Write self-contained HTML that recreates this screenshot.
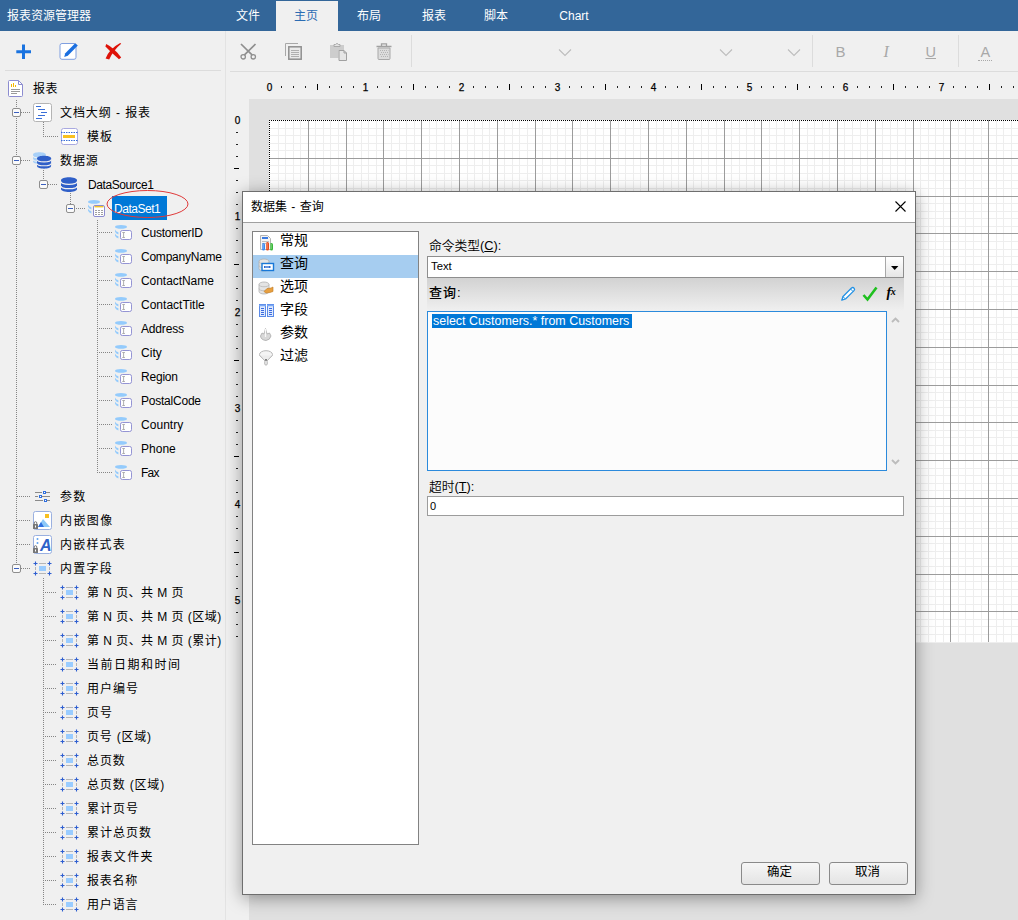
<!DOCTYPE html><html lang="zh-CN"><head><meta charset="utf-8"><title>报表设计器</title><style>
*{box-sizing:border-box;margin:0;padding:0}
html,body{width:1018px;height:920px;overflow:hidden;background:#f0f0f0}
body{position:relative;font-family:"Liberation Sans","Noto Sans CJK SC",sans-serif;font-size:12px;color:#000}
.abs{position:absolute}
#topbar{position:absolute;left:0;top:0;width:1018px;height:31px;background:#336699}
.tab{position:absolute;top:0;height:31px;line-height:33px;color:#fff;font-size:12px;text-align:center;white-space:nowrap}
.tab.act{padding-right:2px;top:1px;height:30px;background:#f0f0f0;color:#2b6cb3;line-height:31px}
#lefthead{position:absolute;left:7px;top:1px;line-height:31px;color:#fff;font-size:12px;white-space:nowrap}
#left{position:absolute;left:0;top:31px;width:226px;height:889px;background:#f0f0f0;border-right:1px solid #e3e3e3}
.trow{position:absolute;height:22px;line-height:22px;font-size:12px;white-space:nowrap;font-weight:400}
.tx{position:absolute;white-space:nowrap}
svg{position:absolute;overflow:visible}
</style></head><body>
<div id="topbar"><div id="lefthead">报表资源管理器</div>
<div class="tab" style="left:223px;width:50px">文件</div>
<div class="tab act" style="left:276px;width:62px">主页</div>
<div class="tab" style="left:338px;width:62px">布局</div>
<div class="tab" style="left:403px;width:62px">报表</div>
<div class="tab" style="left:465px;width:62px">脚本</div>
<div class="tab" style="left:543px;width:62px">Chart</div>
</div>
<div id="left"></div>
<div class="abs" style="left:5px;top:70px;width:216px;height:1px;background:#dcdcdc"></div>
<svg style="left:16px;top:43.5px" width="16" height="16" viewBox="0 0 16 16"><path d="M7.5 0.5V15M0.3 7.8H15" stroke="#1a73e0" stroke-width="3" fill="none"/></svg>
<svg style="left:59px;top:42px" width="20" height="20" viewBox="0 0 20 20"><rect x="1" y="1.5" width="16" height="15.8" rx="2" fill="#fff" stroke="#7f9fe0" stroke-width="1"/><path d="M5.2 15L6.3 11.3L16.2 1.2L18.8 3.6L8.8 13.8Z" fill="#1a6fe0"/></svg>
<svg style="left:105px;top:43px" width="17" height="17" viewBox="0 0 17 17"><path d="M1.2 1Q9.5 5 16.2 14.6L14 16.2Q7 10.2 0.4 3.4Z" fill="#de1208"/><path d="M16.2 0.8Q8.6 7 4.2 16.4L0.6 15.4Q4.6 5.6 15.2 0Z" fill="#de1208"/></svg>
<svg style="left:0;top:0" width="226" height="920" viewBox="0 0 226 920" shape-rendering="crispEdges"><path d="M16.5 100V568" stroke="#858585" stroke-width="1" stroke-dasharray="1 1" fill="none"/><path d="M21 112.5H31" stroke="#858585" stroke-width="1" stroke-dasharray="1 1" fill="none"/><path d="M21 160.5H31" stroke="#858585" stroke-width="1" stroke-dasharray="1 1" fill="none"/><path d="M21 568.5H31" stroke="#858585" stroke-width="1" stroke-dasharray="1 1" fill="none"/><path d="M17 496.5H31" stroke="#858585" stroke-width="1" stroke-dasharray="1 1" fill="none"/><path d="M17 520.5H31" stroke="#858585" stroke-width="1" stroke-dasharray="1 1" fill="none"/><path d="M17 544.5H31" stroke="#858585" stroke-width="1" stroke-dasharray="1 1" fill="none"/><path d="M43.5 122V136" stroke="#858585" stroke-width="1" stroke-dasharray="1 1" fill="none"/><path d="M43 136.5H58" stroke="#858585" stroke-width="1" stroke-dasharray="1 1" fill="none"/><path d="M43.5 170V180" stroke="#858585" stroke-width="1" stroke-dasharray="1 1" fill="none"/><path d="M48 184.5H58" stroke="#858585" stroke-width="1" stroke-dasharray="1 1" fill="none"/><path d="M70.5 193V204" stroke="#858585" stroke-width="1" stroke-dasharray="1 1" fill="none"/><path d="M76 208.5H86" stroke="#858585" stroke-width="1" stroke-dasharray="1 1" fill="none"/><path d="M97.5 220V472" stroke="#858585" stroke-width="1" stroke-dasharray="1 1" fill="none"/><path d="M97 232.5H112" stroke="#858585" stroke-width="1" stroke-dasharray="1 1" fill="none"/><path d="M97 256.5H112" stroke="#858585" stroke-width="1" stroke-dasharray="1 1" fill="none"/><path d="M97 280.5H112" stroke="#858585" stroke-width="1" stroke-dasharray="1 1" fill="none"/><path d="M97 304.5H112" stroke="#858585" stroke-width="1" stroke-dasharray="1 1" fill="none"/><path d="M97 328.5H112" stroke="#858585" stroke-width="1" stroke-dasharray="1 1" fill="none"/><path d="M97 352.5H112" stroke="#858585" stroke-width="1" stroke-dasharray="1 1" fill="none"/><path d="M97 376.5H112" stroke="#858585" stroke-width="1" stroke-dasharray="1 1" fill="none"/><path d="M97 400.5H112" stroke="#858585" stroke-width="1" stroke-dasharray="1 1" fill="none"/><path d="M97 424.5H112" stroke="#858585" stroke-width="1" stroke-dasharray="1 1" fill="none"/><path d="M97 448.5H112" stroke="#858585" stroke-width="1" stroke-dasharray="1 1" fill="none"/><path d="M97 472.5H112" stroke="#858585" stroke-width="1" stroke-dasharray="1 1" fill="none"/><path d="M43.5 578V904" stroke="#858585" stroke-width="1" stroke-dasharray="1 1" fill="none"/><path d="M43 592.5H57" stroke="#858585" stroke-width="1" stroke-dasharray="1 1" fill="none"/><path d="M43 616.5H57" stroke="#858585" stroke-width="1" stroke-dasharray="1 1" fill="none"/><path d="M43 640.5H57" stroke="#858585" stroke-width="1" stroke-dasharray="1 1" fill="none"/><path d="M43 664.5H57" stroke="#858585" stroke-width="1" stroke-dasharray="1 1" fill="none"/><path d="M43 688.5H57" stroke="#858585" stroke-width="1" stroke-dasharray="1 1" fill="none"/><path d="M43 712.5H57" stroke="#858585" stroke-width="1" stroke-dasharray="1 1" fill="none"/><path d="M43 736.5H57" stroke="#858585" stroke-width="1" stroke-dasharray="1 1" fill="none"/><path d="M43 760.5H57" stroke="#858585" stroke-width="1" stroke-dasharray="1 1" fill="none"/><path d="M43 784.5H57" stroke="#858585" stroke-width="1" stroke-dasharray="1 1" fill="none"/><path d="M43 808.5H57" stroke="#858585" stroke-width="1" stroke-dasharray="1 1" fill="none"/><path d="M43 832.5H57" stroke="#858585" stroke-width="1" stroke-dasharray="1 1" fill="none"/><path d="M43 856.5H57" stroke="#858585" stroke-width="1" stroke-dasharray="1 1" fill="none"/><path d="M43 880.5H57" stroke="#858585" stroke-width="1" stroke-dasharray="1 1" fill="none"/><path d="M43 904.5H57" stroke="#858585" stroke-width="1" stroke-dasharray="1 1" fill="none"/><rect x="12.5" y="108.5" width="8" height="8" rx="1.5" fill="#fafafa" stroke="#8e8e8e" shape-rendering="auto"/><path d="M14 112.5H19" stroke="#3a5fbf" stroke-width="1"/><rect x="12.5" y="156.5" width="8" height="8" rx="1.5" fill="#fafafa" stroke="#8e8e8e" shape-rendering="auto"/><path d="M14 160.5H19" stroke="#3a5fbf" stroke-width="1"/><rect x="39.5" y="180.5" width="8" height="8" rx="1.5" fill="#fafafa" stroke="#8e8e8e" shape-rendering="auto"/><path d="M41 184.5H46" stroke="#3a5fbf" stroke-width="1"/><rect x="66.5" y="204.5" width="8" height="8" rx="1.5" fill="#fafafa" stroke="#8e8e8e" shape-rendering="auto"/><path d="M68 208.5H73" stroke="#3a5fbf" stroke-width="1"/><rect x="12.5" y="564.5" width="8" height="8" rx="1.5" fill="#fafafa" stroke="#8e8e8e" shape-rendering="auto"/><path d="M14 568.5H19" stroke="#3a5fbf" stroke-width="1"/></svg>
<div class="abs" style="left:112px;top:196px;width:55px;height:24px;background:#0078d7"></div>
<svg style="left:8px;top:80px" width="20" height="20"><g><path d="M0.5 1.5Q0.5 0.5 1.5 0.5H10.5L14.5 4.5V15.5Q14.5 16.5 13.5 16.5H1.5Q0.5 16.5 0.5 15.5Z" fill="#fff" stroke="#8c8cd0"/><path d="M10.5 0.5V4.5H14.5" fill="none" stroke="#8c8cd0"/><path d="M3.5 7V4M5.5 7V3M7.5 7V5" stroke="#f5b800" stroke-width="1"/><path d="M3 9.5H12M3 11.5H12M3 13.5H9" stroke="#9a9a9a" stroke-width="1"/></g></svg>
<div class="trow" style="left:33px;top:78px;color:#000;letter-spacing:0.442px">报表</div>
<svg style="left:33px;top:103px" width="20" height="20"><g><rect x="0.5" y="0.5" width="18" height="18" rx="2" fill="#fff" stroke="#b4b4b4"/><path d="M3 3.5H8M5 6.5H12M8 9.5H14M5 12.5H12M3 15.5H9" stroke="#3a6fd8" stroke-width="1"/></g></svg>
<div class="trow" style="left:60px;top:102px;color:#000;letter-spacing:0.925px">文档大纲 - 报表</div>
<svg style="left:61px;top:128px" width="20" height="20"><g><rect x="0.5" y="0.5" width="16" height="16" rx="2" fill="#fff" stroke="#a9a9e0"/><path d="M0 4.5H17M0 12.5H17" stroke="#3a6fd8" stroke-width="1" stroke-dasharray="1.5 1"/><rect x="2" y="7" width="12" height="3" fill="#f8c020"/></g></svg>
<div class="trow" style="left:87px;top:126px;color:#000;letter-spacing:0.992px">模板</div>
<svg style="left:33px;top:152px" width="20" height="20"><g><g transform="translate(0,0) scale(0.8)" opacity="1"><g><path d="M0 3.2C0 -0.8 16 -0.8 16 3.2V12C16 16 0 16 0 12Z" fill="#a8d0f8"/><path d="M0 4.6C0 8.2 16 8.2 16 4.6M0 9C0 12.6 16 12.6 16 9" fill="none" stroke="#f0f0f0" stroke-width="1.3"/></g></g><g transform="translate(4,3.5) scale(0.88)"><g><path d="M0 3.2C0 -0.8 16 -0.8 16 3.2V12C16 16 0 16 0 12Z" fill="#2f5fc8"/><path d="M0 4.6C0 8.2 16 8.2 16 4.6M0 9C0 12.6 16 12.6 16 9" fill="none" stroke="#f0f0f0" stroke-width="1.3"/></g></g></g></svg>
<div class="trow" style="left:60px;top:150px;color:#000;letter-spacing:0.928px">数据源</div>
<svg style="left:61px;top:177px" width="20" height="20"><g><path d="M0 3.2C0 -0.8 16 -0.8 16 3.2V12C16 16 0 16 0 12Z" fill="#2f5fc8"/><path d="M0 4.6C0 8.2 16 8.2 16 4.6M0 9C0 12.6 16 12.6 16 9" fill="none" stroke="#f0f0f0" stroke-width="1.3"/></g></svg>
<div class="trow" style="left:88px;top:174px;color:#000;letter-spacing:-0.422px">DataSource1</div>
<svg style="left:88px;top:200px" width="20" height="20"><g><ellipse cx="6" cy="1.9" rx="6" ry="1.9" fill="#94cbfc"/><path d="M0 4.4Q0.6 6.4 3.4 7.2V9.4Q0.4 8.6 0 6.6Z" fill="#94cbfc"/><path d="M0 8.4Q0.6 10.4 3.4 11.2V13.4Q0.4 12.6 0 10.6Z" fill="#94cbfc"/><rect x="5.5" y="5.5" width="11" height="11" rx="1.5" fill="#fff" stroke="#8c8cd0"/><path d="M6.5 6.7H15.5" stroke="#f2c428" stroke-width="1.4"/><path d="M7 10.5H9M10 10.5H12M13 10.5H15M7 12.5H9M10 12.5H12M13 12.5H15M7 14.5H9M10 14.5H12M13 14.5H15" stroke="#a0a0a0"/></g></svg>
<div class="trow" style="left:114px;top:198px;color:#fff;letter-spacing:-0.468px">DataSet1</div>
<svg style="left:115px;top:225px" width="20" height="20"><g><ellipse cx="6" cy="1.9" rx="6" ry="1.9" fill="#94cbfc"/><path d="M0 4.4Q0.6 6.4 3.4 7.2V9.4Q0.4 8.6 0 6.6Z" fill="#94cbfc"/><path d="M0 8.4Q0.6 10.4 3.4 11.2V13.4Q0.4 12.6 0 10.6Z" fill="#94cbfc"/><rect x="5.5" y="5.5" width="11" height="9" rx="1.8" fill="#fff" stroke="#9494d4"/><path d="M7.3 7.5H9.9M7.3 12.5H9.9M8.6 7.5V12.5" stroke="#a6a6a6" stroke-width="0.9"/></g></svg>
<div class="trow" style="left:141px;top:222px;color:#000;letter-spacing:-0.222px">CustomerID</div>
<svg style="left:115px;top:249px" width="20" height="20"><g><ellipse cx="6" cy="1.9" rx="6" ry="1.9" fill="#94cbfc"/><path d="M0 4.4Q0.6 6.4 3.4 7.2V9.4Q0.4 8.6 0 6.6Z" fill="#94cbfc"/><path d="M0 8.4Q0.6 10.4 3.4 11.2V13.4Q0.4 12.6 0 10.6Z" fill="#94cbfc"/><rect x="5.5" y="5.5" width="11" height="9" rx="1.8" fill="#fff" stroke="#9494d4"/><path d="M7.3 7.5H9.9M7.3 12.5H9.9M8.6 7.5V12.5" stroke="#a6a6a6" stroke-width="0.9"/></g></svg>
<div class="trow" style="left:141px;top:246px;color:#000;letter-spacing:-0.234px">CompanyName</div>
<svg style="left:115px;top:273px" width="20" height="20"><g><ellipse cx="6" cy="1.9" rx="6" ry="1.9" fill="#94cbfc"/><path d="M0 4.4Q0.6 6.4 3.4 7.2V9.4Q0.4 8.6 0 6.6Z" fill="#94cbfc"/><path d="M0 8.4Q0.6 10.4 3.4 11.2V13.4Q0.4 12.6 0 10.6Z" fill="#94cbfc"/><rect x="5.5" y="5.5" width="11" height="9" rx="1.8" fill="#fff" stroke="#9494d4"/><path d="M7.3 7.5H9.9M7.3 12.5H9.9M8.6 7.5V12.5" stroke="#a6a6a6" stroke-width="0.9"/></g></svg>
<div class="trow" style="left:141px;top:270px;color:#000;letter-spacing:-0.052px">ContactName</div>
<svg style="left:115px;top:297px" width="20" height="20"><g><ellipse cx="6" cy="1.9" rx="6" ry="1.9" fill="#94cbfc"/><path d="M0 4.4Q0.6 6.4 3.4 7.2V9.4Q0.4 8.6 0 6.6Z" fill="#94cbfc"/><path d="M0 8.4Q0.6 10.4 3.4 11.2V13.4Q0.4 12.6 0 10.6Z" fill="#94cbfc"/><rect x="5.5" y="5.5" width="11" height="9" rx="1.8" fill="#fff" stroke="#9494d4"/><path d="M7.3 7.5H9.9M7.3 12.5H9.9M8.6 7.5V12.5" stroke="#a6a6a6" stroke-width="0.9"/></g></svg>
<div class="trow" style="left:141px;top:294px;color:#000;letter-spacing:0.017px">ContactTitle</div>
<svg style="left:115px;top:321px" width="20" height="20"><g><ellipse cx="6" cy="1.9" rx="6" ry="1.9" fill="#94cbfc"/><path d="M0 4.4Q0.6 6.4 3.4 7.2V9.4Q0.4 8.6 0 6.6Z" fill="#94cbfc"/><path d="M0 8.4Q0.6 10.4 3.4 11.2V13.4Q0.4 12.6 0 10.6Z" fill="#94cbfc"/><rect x="5.5" y="5.5" width="11" height="9" rx="1.8" fill="#fff" stroke="#9494d4"/><path d="M7.3 7.5H9.9M7.3 12.5H9.9M8.6 7.5V12.5" stroke="#a6a6a6" stroke-width="0.9"/></g></svg>
<div class="trow" style="left:141px;top:318px;color:#000;letter-spacing:-0.176px">Address</div>
<svg style="left:115px;top:345px" width="20" height="20"><g><ellipse cx="6" cy="1.9" rx="6" ry="1.9" fill="#94cbfc"/><path d="M0 4.4Q0.6 6.4 3.4 7.2V9.4Q0.4 8.6 0 6.6Z" fill="#94cbfc"/><path d="M0 8.4Q0.6 10.4 3.4 11.2V13.4Q0.4 12.6 0 10.6Z" fill="#94cbfc"/><rect x="5.5" y="5.5" width="11" height="9" rx="1.8" fill="#fff" stroke="#9494d4"/><path d="M7.3 7.5H9.9M7.3 12.5H9.9M8.6 7.5V12.5" stroke="#a6a6a6" stroke-width="0.9"/></g></svg>
<div class="trow" style="left:141px;top:342px;color:#000;letter-spacing:0.032px">City</div>
<svg style="left:115px;top:369px" width="20" height="20"><g><ellipse cx="6" cy="1.9" rx="6" ry="1.9" fill="#94cbfc"/><path d="M0 4.4Q0.6 6.4 3.4 7.2V9.4Q0.4 8.6 0 6.6Z" fill="#94cbfc"/><path d="M0 8.4Q0.6 10.4 3.4 11.2V13.4Q0.4 12.6 0 10.6Z" fill="#94cbfc"/><rect x="5.5" y="5.5" width="11" height="9" rx="1.8" fill="#fff" stroke="#9494d4"/><path d="M7.3 7.5H9.9M7.3 12.5H9.9M8.6 7.5V12.5" stroke="#a6a6a6" stroke-width="0.9"/></g></svg>
<div class="trow" style="left:141px;top:366px;color:#000;letter-spacing:-0.205px">Region</div>
<svg style="left:115px;top:393px" width="20" height="20"><g><ellipse cx="6" cy="1.9" rx="6" ry="1.9" fill="#94cbfc"/><path d="M0 4.4Q0.6 6.4 3.4 7.2V9.4Q0.4 8.6 0 6.6Z" fill="#94cbfc"/><path d="M0 8.4Q0.6 10.4 3.4 11.2V13.4Q0.4 12.6 0 10.6Z" fill="#94cbfc"/><rect x="5.5" y="5.5" width="11" height="9" rx="1.8" fill="#fff" stroke="#9494d4"/><path d="M7.3 7.5H9.9M7.3 12.5H9.9M8.6 7.5V12.5" stroke="#a6a6a6" stroke-width="0.9"/></g></svg>
<div class="trow" style="left:141px;top:390px;color:#000;letter-spacing:-0.225px">PostalCode</div>
<svg style="left:115px;top:417px" width="20" height="20"><g><ellipse cx="6" cy="1.9" rx="6" ry="1.9" fill="#94cbfc"/><path d="M0 4.4Q0.6 6.4 3.4 7.2V9.4Q0.4 8.6 0 6.6Z" fill="#94cbfc"/><path d="M0 8.4Q0.6 10.4 3.4 11.2V13.4Q0.4 12.6 0 10.6Z" fill="#94cbfc"/><rect x="5.5" y="5.5" width="11" height="9" rx="1.8" fill="#fff" stroke="#9494d4"/><path d="M7.3 7.5H9.9M7.3 12.5H9.9M8.6 7.5V12.5" stroke="#a6a6a6" stroke-width="0.9"/></g></svg>
<div class="trow" style="left:141px;top:414px;color:#000;letter-spacing:0.038px">Country</div>
<svg style="left:115px;top:441px" width="20" height="20"><g><ellipse cx="6" cy="1.9" rx="6" ry="1.9" fill="#94cbfc"/><path d="M0 4.4Q0.6 6.4 3.4 7.2V9.4Q0.4 8.6 0 6.6Z" fill="#94cbfc"/><path d="M0 8.4Q0.6 10.4 3.4 11.2V13.4Q0.4 12.6 0 10.6Z" fill="#94cbfc"/><rect x="5.5" y="5.5" width="11" height="9" rx="1.8" fill="#fff" stroke="#9494d4"/><path d="M7.3 7.5H9.9M7.3 12.5H9.9M8.6 7.5V12.5" stroke="#a6a6a6" stroke-width="0.9"/></g></svg>
<div class="trow" style="left:141px;top:438px;color:#000;letter-spacing:0.019px">Phone</div>
<svg style="left:115px;top:465px" width="20" height="20"><g><ellipse cx="6" cy="1.9" rx="6" ry="1.9" fill="#94cbfc"/><path d="M0 4.4Q0.6 6.4 3.4 7.2V9.4Q0.4 8.6 0 6.6Z" fill="#94cbfc"/><path d="M0 8.4Q0.6 10.4 3.4 11.2V13.4Q0.4 12.6 0 10.6Z" fill="#94cbfc"/><rect x="5.5" y="5.5" width="11" height="9" rx="1.8" fill="#fff" stroke="#9494d4"/><path d="M7.3 7.5H9.9M7.3 12.5H9.9M8.6 7.5V12.5" stroke="#a6a6a6" stroke-width="0.9"/></g></svg>
<div class="trow" style="left:141px;top:462px;color:#000;letter-spacing:-0.739px">Fax</div>
<svg style="left:35px;top:490px" width="20" height="20"><g><path d="M0 2.5H7M11 2.5H15M0 6.5H3M7 6.5H15M0 10.5H8M12 10.5H15" stroke="#8a8a8a"/><rect x="8.5" y="1.5" width="2" height="2" fill="#fff" stroke="#2f6fe0"/><rect x="4.5" y="5.5" width="2" height="2" fill="#fff" stroke="#2f6fe0"/><rect x="9.5" y="9.5" width="2" height="2" fill="#fff" stroke="#2f6fe0"/></g></svg>
<div class="trow" style="left:60px;top:486px;color:#000;letter-spacing:1.142px">参数</div>
<svg style="left:33px;top:511px" width="20" height="20"><g><rect x="0.5" y="0.5" width="18" height="18" rx="2" fill="#fff" stroke="#9ab0e0"/><rect x="12" y="3" width="4" height="4" fill="#f8c020"/><path d="M5 16L10 8L17 16Z" fill="#8cc8f8"/><path d="M5 16L8 11L11 16Z" fill="#2f6fe0"/><rect x="0" y="13" width="5" height="5" rx="0.5" fill="#777"/><path d="M1.2 13V12A1.3 1.3 0 0 1 3.8 12V13" fill="none" stroke="#777"/><rect x="2" y="14.5" width="1" height="2" fill="#fff"/></g></svg>
<div class="trow" style="left:60px;top:510px;color:#000;letter-spacing:1.421px">内嵌图像</div>
<svg style="left:33px;top:535px" width="20" height="20"><g><rect x="0.5" y="0.5" width="18" height="18" rx="2" fill="#fff" stroke="#9ab0e0"/><text x="7" y="16" font-family="Liberation Sans,sans-serif" font-weight="bold" font-style="italic" font-size="16" fill="#2f62c8">A</text><path d="M4.5 3V5M4.5 7V9" stroke="#6aa8f0" stroke-width="1.6"/><rect x="0" y="13" width="5" height="5" rx="0.5" fill="#777"/><path d="M1.2 13V12A1.3 1.3 0 0 1 3.8 12V13" fill="none" stroke="#777"/><rect x="2" y="14.5" width="1" height="2" fill="#fff"/></g></svg>
<div class="trow" style="left:60px;top:534px;color:#000;letter-spacing:1.197px">内嵌样式表</div>
<svg style="left:33px;top:561px" width="20" height="20"><g><path d="M0.5 2.5H4.5M2.5 0.5V4.5" stroke="#2f5fd0" stroke-width="1.1"/><path d="M14.5 2.5H18.5M16.5 0.5V4.5" stroke="#2f5fd0" stroke-width="1.1"/><path d="M0.5 12.5H4.5M2.5 10.5V14.5" stroke="#2f5fd0" stroke-width="1.1"/><path d="M14.5 12.5H18.5M16.5 10.5V14.5" stroke="#2f5fd0" stroke-width="1.1"/><path d="M6 2.5H13M6 12.5H13M2.5 6V9M16.5 6V9" stroke="#b6b6b6"/><rect x="6" y="5" width="7" height="5" fill="#99ccff"/></g></svg>
<div class="trow" style="left:60px;top:558px;color:#000;letter-spacing:1.246px">内置字段</div>
<svg style="left:60px;top:585px" width="20" height="20"><g><path d="M0.5 2.5H4.5M2.5 0.5V4.5" stroke="#2f5fd0" stroke-width="1.1"/><path d="M14.5 2.5H18.5M16.5 0.5V4.5" stroke="#2f5fd0" stroke-width="1.1"/><path d="M0.5 12.5H4.5M2.5 10.5V14.5" stroke="#2f5fd0" stroke-width="1.1"/><path d="M14.5 12.5H18.5M16.5 10.5V14.5" stroke="#2f5fd0" stroke-width="1.1"/><path d="M6 2.5H13M6 12.5H13M2.5 6V9M16.5 6V9" stroke="#b6b6b6"/><rect x="6" y="5" width="7" height="5" fill="#99ccff"/></g></svg>
<div class="trow" style="left:87px;top:582px;color:#000;letter-spacing:0.455px">第 N 页、共 M 页</div>
<svg style="left:60px;top:609px" width="20" height="20"><g><path d="M0.5 2.5H4.5M2.5 0.5V4.5" stroke="#2f5fd0" stroke-width="1.1"/><path d="M14.5 2.5H18.5M16.5 0.5V4.5" stroke="#2f5fd0" stroke-width="1.1"/><path d="M0.5 12.5H4.5M2.5 10.5V14.5" stroke="#2f5fd0" stroke-width="1.1"/><path d="M14.5 12.5H18.5M16.5 10.5V14.5" stroke="#2f5fd0" stroke-width="1.1"/><path d="M6 2.5H13M6 12.5H13M2.5 6V9M16.5 6V9" stroke="#b6b6b6"/><rect x="6" y="5" width="7" height="5" fill="#99ccff"/></g></svg>
<div class="trow" style="left:87px;top:606px;color:#000;letter-spacing:0.461px">第 N 页、共 M 页 (区域)</div>
<svg style="left:60px;top:633px" width="20" height="20"><g><path d="M0.5 2.5H4.5M2.5 0.5V4.5" stroke="#2f5fd0" stroke-width="1.1"/><path d="M14.5 2.5H18.5M16.5 0.5V4.5" stroke="#2f5fd0" stroke-width="1.1"/><path d="M0.5 12.5H4.5M2.5 10.5V14.5" stroke="#2f5fd0" stroke-width="1.1"/><path d="M14.5 12.5H18.5M16.5 10.5V14.5" stroke="#2f5fd0" stroke-width="1.1"/><path d="M6 2.5H13M6 12.5H13M2.5 6V9M16.5 6V9" stroke="#b6b6b6"/><rect x="6" y="5" width="7" height="5" fill="#99ccff"/></g></svg>
<div class="trow" style="left:87px;top:630px;color:#000;letter-spacing:0.461px">第 N 页、共 M 页 (累计)</div>
<svg style="left:60px;top:657px" width="20" height="20"><g><path d="M0.5 2.5H4.5M2.5 0.5V4.5" stroke="#2f5fd0" stroke-width="1.1"/><path d="M14.5 2.5H18.5M16.5 0.5V4.5" stroke="#2f5fd0" stroke-width="1.1"/><path d="M0.5 12.5H4.5M2.5 10.5V14.5" stroke="#2f5fd0" stroke-width="1.1"/><path d="M14.5 12.5H18.5M16.5 10.5V14.5" stroke="#2f5fd0" stroke-width="1.1"/><path d="M6 2.5H13M6 12.5H13M2.5 6V9M16.5 6V9" stroke="#b6b6b6"/><rect x="6" y="5" width="7" height="5" fill="#99ccff"/></g></svg>
<div class="trow" style="left:87px;top:654px;color:#000;letter-spacing:1.483px">当前日期和时间</div>
<svg style="left:60px;top:681px" width="20" height="20"><g><path d="M0.5 2.5H4.5M2.5 0.5V4.5" stroke="#2f5fd0" stroke-width="1.1"/><path d="M14.5 2.5H18.5M16.5 0.5V4.5" stroke="#2f5fd0" stroke-width="1.1"/><path d="M0.5 12.5H4.5M2.5 10.5V14.5" stroke="#2f5fd0" stroke-width="1.1"/><path d="M14.5 12.5H18.5M16.5 10.5V14.5" stroke="#2f5fd0" stroke-width="1.1"/><path d="M6 2.5H13M6 12.5H13M2.5 6V9M16.5 6V9" stroke="#b6b6b6"/><rect x="6" y="5" width="7" height="5" fill="#99ccff"/></g></svg>
<div class="trow" style="left:87px;top:678px;color:#000;letter-spacing:0.996px">用户编号</div>
<svg style="left:60px;top:705px" width="20" height="20"><g><path d="M0.5 2.5H4.5M2.5 0.5V4.5" stroke="#2f5fd0" stroke-width="1.1"/><path d="M14.5 2.5H18.5M16.5 0.5V4.5" stroke="#2f5fd0" stroke-width="1.1"/><path d="M0.5 12.5H4.5M2.5 10.5V14.5" stroke="#2f5fd0" stroke-width="1.1"/><path d="M14.5 12.5H18.5M16.5 10.5V14.5" stroke="#2f5fd0" stroke-width="1.1"/><path d="M6 2.5H13M6 12.5H13M2.5 6V9M16.5 6V9" stroke="#b6b6b6"/><rect x="6" y="5" width="7" height="5" fill="#99ccff"/></g></svg>
<div class="trow" style="left:87px;top:702px;color:#000;letter-spacing:0.892px">页号</div>
<svg style="left:60px;top:729px" width="20" height="20"><g><path d="M0.5 2.5H4.5M2.5 0.5V4.5" stroke="#2f5fd0" stroke-width="1.1"/><path d="M14.5 2.5H18.5M16.5 0.5V4.5" stroke="#2f5fd0" stroke-width="1.1"/><path d="M0.5 12.5H4.5M2.5 10.5V14.5" stroke="#2f5fd0" stroke-width="1.1"/><path d="M14.5 12.5H18.5M16.5 10.5V14.5" stroke="#2f5fd0" stroke-width="1.1"/><path d="M6 2.5H13M6 12.5H13M2.5 6V9M16.5 6V9" stroke="#b6b6b6"/><rect x="6" y="5" width="7" height="5" fill="#99ccff"/></g></svg>
<div class="trow" style="left:87px;top:726px;color:#000;letter-spacing:0.796px">页号 (区域)</div>
<svg style="left:60px;top:753px" width="20" height="20"><g><path d="M0.5 2.5H4.5M2.5 0.5V4.5" stroke="#2f5fd0" stroke-width="1.1"/><path d="M14.5 2.5H18.5M16.5 0.5V4.5" stroke="#2f5fd0" stroke-width="1.1"/><path d="M0.5 12.5H4.5M2.5 10.5V14.5" stroke="#2f5fd0" stroke-width="1.1"/><path d="M14.5 12.5H18.5M16.5 10.5V14.5" stroke="#2f5fd0" stroke-width="1.1"/><path d="M6 2.5H13M6 12.5H13M2.5 6V9M16.5 6V9" stroke="#b6b6b6"/><rect x="6" y="5" width="7" height="5" fill="#99ccff"/></g></svg>
<div class="trow" style="left:87px;top:750px;color:#000;letter-spacing:0.928px">总页数</div>
<svg style="left:60px;top:777px" width="20" height="20"><g><path d="M0.5 2.5H4.5M2.5 0.5V4.5" stroke="#2f5fd0" stroke-width="1.1"/><path d="M14.5 2.5H18.5M16.5 0.5V4.5" stroke="#2f5fd0" stroke-width="1.1"/><path d="M0.5 12.5H4.5M2.5 10.5V14.5" stroke="#2f5fd0" stroke-width="1.1"/><path d="M14.5 12.5H18.5M16.5 10.5V14.5" stroke="#2f5fd0" stroke-width="1.1"/><path d="M6 2.5H13M6 12.5H13M2.5 6V9M16.5 6V9" stroke="#b6b6b6"/><rect x="6" y="5" width="7" height="5" fill="#99ccff"/></g></svg>
<div class="trow" style="left:87px;top:774px;color:#000;letter-spacing:0.834px">总页数 (区域)</div>
<svg style="left:60px;top:801px" width="20" height="20"><g><path d="M0.5 2.5H4.5M2.5 0.5V4.5" stroke="#2f5fd0" stroke-width="1.1"/><path d="M14.5 2.5H18.5M16.5 0.5V4.5" stroke="#2f5fd0" stroke-width="1.1"/><path d="M0.5 12.5H4.5M2.5 10.5V14.5" stroke="#2f5fd0" stroke-width="1.1"/><path d="M14.5 12.5H18.5M16.5 10.5V14.5" stroke="#2f5fd0" stroke-width="1.1"/><path d="M6 2.5H13M6 12.5H13M2.5 6V9M16.5 6V9" stroke="#b6b6b6"/><rect x="6" y="5" width="7" height="5" fill="#99ccff"/></g></svg>
<div class="trow" style="left:87px;top:798px;color:#000;letter-spacing:0.996px">累计页号</div>
<svg style="left:60px;top:825px" width="20" height="20"><g><path d="M0.5 2.5H4.5M2.5 0.5V4.5" stroke="#2f5fd0" stroke-width="1.1"/><path d="M14.5 2.5H18.5M16.5 0.5V4.5" stroke="#2f5fd0" stroke-width="1.1"/><path d="M0.5 12.5H4.5M2.5 10.5V14.5" stroke="#2f5fd0" stroke-width="1.1"/><path d="M14.5 12.5H18.5M16.5 10.5V14.5" stroke="#2f5fd0" stroke-width="1.1"/><path d="M6 2.5H13M6 12.5H13M2.5 6V9M16.5 6V9" stroke="#b6b6b6"/><rect x="6" y="5" width="7" height="5" fill="#99ccff"/></g></svg>
<div class="trow" style="left:87px;top:822px;color:#000;letter-spacing:0.997px">累计总页数</div>
<svg style="left:60px;top:849px" width="20" height="20"><g><path d="M0.5 2.5H4.5M2.5 0.5V4.5" stroke="#2f5fd0" stroke-width="1.1"/><path d="M14.5 2.5H18.5M16.5 0.5V4.5" stroke="#2f5fd0" stroke-width="1.1"/><path d="M0.5 12.5H4.5M2.5 10.5V14.5" stroke="#2f5fd0" stroke-width="1.1"/><path d="M14.5 12.5H18.5M16.5 10.5V14.5" stroke="#2f5fd0" stroke-width="1.1"/><path d="M6 2.5H13M6 12.5H13M2.5 6V9M16.5 6V9" stroke="#b6b6b6"/><rect x="6" y="5" width="7" height="5" fill="#99ccff"/></g></svg>
<div class="trow" style="left:87px;top:846px;color:#000;letter-spacing:1.397px">报表文件夹</div>
<svg style="left:60px;top:873px" width="20" height="20"><g><path d="M0.5 2.5H4.5M2.5 0.5V4.5" stroke="#2f5fd0" stroke-width="1.1"/><path d="M14.5 2.5H18.5M16.5 0.5V4.5" stroke="#2f5fd0" stroke-width="1.1"/><path d="M0.5 12.5H4.5M2.5 10.5V14.5" stroke="#2f5fd0" stroke-width="1.1"/><path d="M14.5 12.5H18.5M16.5 10.5V14.5" stroke="#2f5fd0" stroke-width="1.1"/><path d="M6 2.5H13M6 12.5H13M2.5 6V9M16.5 6V9" stroke="#b6b6b6"/><rect x="6" y="5" width="7" height="5" fill="#99ccff"/></g></svg>
<div class="trow" style="left:87px;top:870px;color:#000;letter-spacing:0.746px">报表名称</div>
<svg style="left:60px;top:897px" width="20" height="20"><g><path d="M0.5 2.5H4.5M2.5 0.5V4.5" stroke="#2f5fd0" stroke-width="1.1"/><path d="M14.5 2.5H18.5M16.5 0.5V4.5" stroke="#2f5fd0" stroke-width="1.1"/><path d="M0.5 12.5H4.5M2.5 10.5V14.5" stroke="#2f5fd0" stroke-width="1.1"/><path d="M14.5 12.5H18.5M16.5 10.5V14.5" stroke="#2f5fd0" stroke-width="1.1"/><path d="M6 2.5H13M6 12.5H13M2.5 6V9M16.5 6V9" stroke="#b6b6b6"/><rect x="6" y="5" width="7" height="5" fill="#99ccff"/></g></svg>
<div class="trow" style="left:87px;top:894px;color:#000;letter-spacing:0.821px">用户语言</div>
<svg style="left:100px;top:185px" width="100" height="40"><ellipse cx="47.5" cy="19" rx="40.5" ry="13.5" fill="none" stroke="#e03a3a" stroke-width="1"/></svg>
<div class="abs" style="left:230px;top:71px;width:788px;height:1px;background:#dcdcdc"></div>
<div class="abs" style="left:411px;top:35px;width:1px;height:32px;background:#dcdcdc"></div>
<div class="abs" style="left:812px;top:35px;width:1px;height:32px;background:#dcdcdc"></div>
<div class="abs" style="left:958px;top:35px;width:1px;height:32px;background:#dcdcdc"></div>
<svg style="left:240px;top:43px" width="17" height="17" viewBox="0 0 17 17"><path d="M1 1L12.3 12.2M15.5 1L4.2 12.2" stroke="#8f8f8f" stroke-width="1.7" fill="none"/><circle cx="3.2" cy="13.8" r="2.2" fill="#f0f0f0" stroke="#8f8f8f" stroke-width="1.3"/><circle cx="13.3" cy="13.8" r="2.2" fill="#f0f0f0" stroke="#8f8f8f" stroke-width="1.3"/></svg>
<svg style="left:284px;top:42px" width="19" height="19" viewBox="0 0 19 19"><path d="M1.5 14V1.5H14" stroke="#a8a8a8" fill="none"/><rect x="4.8" y="4.8" width="12.4" height="12.4" fill="#eaeaea" stroke="#8f8f8f" stroke-width="1.5"/><path d="M7 8.5H15M7 10.5H15M7 12.5H15M7 14.5H15" stroke="#b0b0b0"/></svg>
<svg style="left:329px;top:42px" width="19" height="20" viewBox="0 0 19 20"><path d="M1 3H15V9H9.5V16H1Z" fill="#cdcdcd"/><path d="M5 4.5V2.5H6.5Q8 0.2 9.5 2.5H11V4.5Z" fill="#e4e4e4" stroke="#a4a4a4" stroke-width="0.9"/><path d="M10 8.5H15L17.5 11V18.5H10Z" fill="#e6e6e6" stroke="#a0a0a0"/><path d="M15 8.5V11H17.5" fill="none" stroke="#a0a0a0"/></svg>
<svg style="left:376px;top:42px" width="17" height="18" viewBox="0 0 17 18"><path d="M0.5 4.5H15.5M5.5 4V1.8H10.5V4" stroke="#a0a0a0" fill="none" stroke-width="1.3"/><path d="M2 6H14V16.5Q14 17.5 13 17.5H3Q2 17.5 2 16.5Z" fill="#dcdcdc" stroke="#a8a8a8"/><path d="M4 8.5H12.5M5 10.5H12.5M4 12.5H12.5M5 14.5H12.5" stroke="#b4b4b4" stroke-dasharray="1 1"/></svg>
<svg style="left:558px;top:48px" width="14" height="9" viewBox="0 0 14 9"><path d="M1 1.5L7 7.5L13 1.5" stroke="#bdbdbd" stroke-width="1.1" fill="none"/></svg>
<svg style="left:719px;top:48px" width="14" height="9" viewBox="0 0 14 9"><path d="M1 1.5L7 7.5L13 1.5" stroke="#bdbdbd" stroke-width="1.1" fill="none"/></svg>
<svg style="left:787px;top:48px" width="14" height="9" viewBox="0 0 14 9"><path d="M1 1.5L7 7.5L13 1.5" stroke="#bdbdbd" stroke-width="1.1" fill="none"/></svg>
<div class="tx" style="left:835.5px;top:41px;font-size:15px;line-height:22px;color:#a8a8a8">B</div>
<div class="tx" style="left:883.5px;top:41px;font-size:16px;line-height:22px;color:#a8a8a8;font-family:'Liberation Serif',serif;font-style:italic">I</div>
<div class="tx" style="left:925.5px;top:41px;font-size:14.5px;line-height:22px;color:#a8a8a8;text-decoration:underline">U</div>
<div class="tx" style="left:980.5px;top:41px;font-size:14.5px;line-height:22px;color:#a8a8a8">A</div>
<div class="abs" style="left:978px;top:60px;width:14px;height:0;border-top:1px dotted #a8a8a8"></div>
<svg style="left:0;top:0" width="1018" height="920" viewBox="0 0 1018 920" shape-rendering="crispEdges"><rect x="281" y="86" width="1" height="2" fill="#222"/><rect x="293" y="86" width="1" height="2" fill="#222"/><rect x="305" y="86" width="1" height="2" fill="#222"/><rect x="317" y="84" width="1" height="6" fill="#000"/><rect x="329" y="86" width="1" height="2" fill="#222"/><rect x="341" y="86" width="1" height="2" fill="#222"/><rect x="353" y="86" width="1" height="2" fill="#222"/><rect x="377" y="86" width="1" height="2" fill="#222"/><rect x="389" y="86" width="1" height="2" fill="#222"/><rect x="401" y="86" width="1" height="2" fill="#222"/><rect x="413" y="84" width="1" height="6" fill="#000"/><rect x="425" y="86" width="1" height="2" fill="#222"/><rect x="437" y="86" width="1" height="2" fill="#222"/><rect x="449" y="86" width="1" height="2" fill="#222"/><rect x="473" y="86" width="1" height="2" fill="#222"/><rect x="485" y="86" width="1" height="2" fill="#222"/><rect x="497" y="86" width="1" height="2" fill="#222"/><rect x="509" y="84" width="1" height="6" fill="#000"/><rect x="521" y="86" width="1" height="2" fill="#222"/><rect x="533" y="86" width="1" height="2" fill="#222"/><rect x="545" y="86" width="1" height="2" fill="#222"/><rect x="569" y="86" width="1" height="2" fill="#222"/><rect x="581" y="86" width="1" height="2" fill="#222"/><rect x="593" y="86" width="1" height="2" fill="#222"/><rect x="605" y="84" width="1" height="6" fill="#000"/><rect x="617" y="86" width="1" height="2" fill="#222"/><rect x="629" y="86" width="1" height="2" fill="#222"/><rect x="641" y="86" width="1" height="2" fill="#222"/><rect x="665" y="86" width="1" height="2" fill="#222"/><rect x="677" y="86" width="1" height="2" fill="#222"/><rect x="689" y="86" width="1" height="2" fill="#222"/><rect x="701" y="84" width="1" height="6" fill="#000"/><rect x="713" y="86" width="1" height="2" fill="#222"/><rect x="725" y="86" width="1" height="2" fill="#222"/><rect x="737" y="86" width="1" height="2" fill="#222"/><rect x="761" y="86" width="1" height="2" fill="#222"/><rect x="773" y="86" width="1" height="2" fill="#222"/><rect x="785" y="86" width="1" height="2" fill="#222"/><rect x="797" y="84" width="1" height="6" fill="#000"/><rect x="809" y="86" width="1" height="2" fill="#222"/><rect x="821" y="86" width="1" height="2" fill="#222"/><rect x="833" y="86" width="1" height="2" fill="#222"/><rect x="857" y="86" width="1" height="2" fill="#222"/><rect x="869" y="86" width="1" height="2" fill="#222"/><rect x="881" y="86" width="1" height="2" fill="#222"/><rect x="893" y="84" width="1" height="6" fill="#000"/><rect x="905" y="86" width="1" height="2" fill="#222"/><rect x="917" y="86" width="1" height="2" fill="#222"/><rect x="929" y="86" width="1" height="2" fill="#222"/><rect x="953" y="86" width="1" height="2" fill="#222"/><rect x="965" y="86" width="1" height="2" fill="#222"/><rect x="977" y="86" width="1" height="2" fill="#222"/><rect x="989" y="84" width="1" height="6" fill="#000"/><rect x="1001" y="86" width="1" height="2" fill="#222"/><rect x="1013" y="86" width="1" height="2" fill="#222"/><rect x="236" y="132" width="2" height="1" fill="#222"/><rect x="236" y="144" width="2" height="1" fill="#222"/><rect x="236" y="156" width="2" height="1" fill="#222"/><rect x="234" y="168" width="5" height="1" fill="#000"/><rect x="236" y="180" width="2" height="1" fill="#222"/><rect x="236" y="192" width="2" height="1" fill="#222"/><rect x="236" y="204" width="2" height="1" fill="#222"/><rect x="236" y="228" width="2" height="1" fill="#222"/><rect x="236" y="240" width="2" height="1" fill="#222"/><rect x="236" y="252" width="2" height="1" fill="#222"/><rect x="234" y="264" width="5" height="1" fill="#000"/><rect x="236" y="276" width="2" height="1" fill="#222"/><rect x="236" y="288" width="2" height="1" fill="#222"/><rect x="236" y="300" width="2" height="1" fill="#222"/><rect x="236" y="324" width="2" height="1" fill="#222"/><rect x="236" y="336" width="2" height="1" fill="#222"/><rect x="236" y="348" width="2" height="1" fill="#222"/><rect x="234" y="360" width="5" height="1" fill="#000"/><rect x="236" y="372" width="2" height="1" fill="#222"/><rect x="236" y="384" width="2" height="1" fill="#222"/><rect x="236" y="396" width="2" height="1" fill="#222"/><rect x="236" y="420" width="2" height="1" fill="#222"/><rect x="236" y="432" width="2" height="1" fill="#222"/><rect x="236" y="444" width="2" height="1" fill="#222"/><rect x="234" y="456" width="5" height="1" fill="#000"/><rect x="236" y="468" width="2" height="1" fill="#222"/><rect x="236" y="480" width="2" height="1" fill="#222"/><rect x="236" y="492" width="2" height="1" fill="#222"/><rect x="236" y="516" width="2" height="1" fill="#222"/><rect x="236" y="528" width="2" height="1" fill="#222"/><rect x="236" y="540" width="2" height="1" fill="#222"/><rect x="234" y="552" width="5" height="1" fill="#000"/><rect x="236" y="564" width="2" height="1" fill="#222"/><rect x="236" y="576" width="2" height="1" fill="#222"/><rect x="236" y="588" width="2" height="1" fill="#222"/><rect x="236" y="612" width="2" height="1" fill="#222"/><rect x="236" y="624" width="2" height="1" fill="#222"/><rect x="236" y="636" width="2" height="1" fill="#222"/></svg>
<div class="tx" style="left:259.5px;top:81.5px;width:20px;text-align:center;font-size:10px;line-height:12px;-webkit-text-stroke:0.25px #000">0</div>
<div class="tx" style="left:355.5px;top:81.5px;width:20px;text-align:center;font-size:10px;line-height:12px;-webkit-text-stroke:0.25px #000">1</div>
<div class="tx" style="left:451.5px;top:81.5px;width:20px;text-align:center;font-size:10px;line-height:12px;-webkit-text-stroke:0.25px #000">2</div>
<div class="tx" style="left:547.5px;top:81.5px;width:20px;text-align:center;font-size:10px;line-height:12px;-webkit-text-stroke:0.25px #000">3</div>
<div class="tx" style="left:643.5px;top:81.5px;width:20px;text-align:center;font-size:10px;line-height:12px;-webkit-text-stroke:0.25px #000">4</div>
<div class="tx" style="left:739.5px;top:81.5px;width:20px;text-align:center;font-size:10px;line-height:12px;-webkit-text-stroke:0.25px #000">5</div>
<div class="tx" style="left:835.5px;top:81.5px;width:20px;text-align:center;font-size:10px;line-height:12px;-webkit-text-stroke:0.25px #000">6</div>
<div class="tx" style="left:931.5px;top:81.5px;width:20px;text-align:center;font-size:10px;line-height:12px;-webkit-text-stroke:0.25px #000">7</div>
<div class="tx" style="left:227.5px;top:114.5px;width:20px;text-align:center;font-size:10px;line-height:12px;-webkit-text-stroke:0.25px #000">0</div>
<div class="tx" style="left:227.5px;top:210.5px;width:20px;text-align:center;font-size:10px;line-height:12px;-webkit-text-stroke:0.25px #000">1</div>
<div class="tx" style="left:227.5px;top:306.5px;width:20px;text-align:center;font-size:10px;line-height:12px;-webkit-text-stroke:0.25px #000">2</div>
<div class="tx" style="left:227.5px;top:402.5px;width:20px;text-align:center;font-size:10px;line-height:12px;-webkit-text-stroke:0.25px #000">3</div>
<div class="tx" style="left:227.5px;top:498.5px;width:20px;text-align:center;font-size:10px;line-height:12px;-webkit-text-stroke:0.25px #000">4</div>
<div class="tx" style="left:227.5px;top:594.5px;width:20px;text-align:center;font-size:10px;line-height:12px;-webkit-text-stroke:0.25px #000">5</div>
<div class="abs" style="left:249px;top:99px;width:769px;height:821px;background:#e0e0e0"></div>
<div class="abs" style="left:269px;top:120px;width:749px;height:522px;background:#fff"></div>
<svg style="left:270px;top:120px" width="748" height="522" viewBox="0 0 748 522" shape-rendering="crispEdges"><path d="M8.5 0V522M15.5 0V522M23.5 0V522M30.5 0V522M45.5 0V522M53.5 0V522M60.5 0V522M68.5 0V522M83.5 0V522M91.5 0V522M98.5 0V522M106.5 0V522M121.5 0V522M129.5 0V522M136.5 0V522M144.5 0V522M159.5 0V522M166.5 0V522M174.5 0V522M181.5 0V522M197.5 0V522M204.5 0V522M212.5 0V522M219.5 0V522M234.5 0V522M242.5 0V522M249.5 0V522M257.5 0V522M272.5 0V522M280.5 0V522M287.5 0V522M295.5 0V522M310.5 0V522M317.5 0V522M325.5 0V522M333.5 0V522M348.5 0V522M355.5 0V522M363.5 0V522M370.5 0V522M386.5 0V522M393.5 0V522M401.5 0V522M408.5 0V522M423.5 0V522M431.5 0V522M438.5 0V522M446.5 0V522M461.5 0V522M469.5 0V522M476.5 0V522M484.5 0V522M499.5 0V522M506.5 0V522M514.5 0V522M522.5 0V522M537.5 0V522M544.5 0V522M552.5 0V522M559.5 0V522M574.5 0V522M582.5 0V522M590.5 0V522M597.5 0V522M612.5 0V522M620.5 0V522M627.5 0V522M635.5 0V522M650.5 0V522M658.5 0V522M665.5 0V522M673.5 0V522M688.5 0V522M695.5 0V522M703.5 0V522M711.5 0V522M726.5 0V522M733.5 0V522M741.5 0V522M0 8.5H748M0 15.5H748M0 23.5H748M0 30.5H748M0 45.5H748M0 53.5H748M0 60.5H748M0 68.5H748M0 83.5H748M0 91.5H748M0 98.5H748M0 106.5H748M0 121.5H748M0 129.5H748M0 136.5H748M0 144.5H748M0 159.5H748M0 166.5H748M0 174.5H748M0 181.5H748M0 197.5H748M0 204.5H748M0 212.5H748M0 219.5H748M0 234.5H748M0 242.5H748M0 249.5H748M0 257.5H748M0 272.5H748M0 280.5H748M0 287.5H748M0 295.5H748M0 310.5H748M0 317.5H748M0 325.5H748M0 333.5H748M0 348.5H748M0 355.5H748M0 363.5H748M0 370.5H748M0 386.5H748M0 393.5H748M0 401.5H748M0 408.5H748M0 423.5H748M0 431.5H748M0 438.5H748M0 446.5H748M0 461.5H748M0 469.5H748M0 476.5H748M0 484.5H748M0 499.5H748M0 506.5H748M0 514.5H748M0 522.5H748" stroke="#eeeeee" stroke-width="1" fill="none"/><path d="M38.5 0V522M76.5 0V522M113.5 0V522M151.5 0V522M189.5 0V522M227.5 0V522M265.5 0V522M302.5 0V522M340.5 0V522M378.5 0V522M416.5 0V522M454.5 0V522M491.5 0V522M529.5 0V522M567.5 0V522M605.5 0V522M643.5 0V522M680.5 0V522M718.5 0V522M0 38.5H748M0 76.5H748M0 113.5H748M0 151.5H748M0 189.5H748M0 227.5H748M0 265.5H748M0 302.5H748M0 340.5H748M0 378.5H748M0 416.5H748M0 454.5H748M0 491.5H748" stroke="#9c9c9c" stroke-width="1" fill="none"/><path d="M-1 0.5H748M-0.5 0V522" stroke="#000" stroke-width="1" stroke-dasharray="1 1" fill="none"/></svg>
<div class="abs" id="dlg" style="left:242px;top:191px;width:674px;height:704px;background:#f0f0f0;border:1px solid #6e6e6e;box-shadow:0 3px 16px rgba(0,0,0,.38)">
<div class="abs" style="left:0px;top:0px;width:672px;height:30px;background:#fff"></div>
<div class="abs" style="left:0px;top:30px;width:672px;height:1px;background:#a0a0a0"></div>
<div class="tx" style="left:8px;top:7px;line-height:17px;font-size:12px;word-spacing:1px">数据集 - 查询</div>
<svg style="left:652px;top:9px" width="11" height="11" viewBox="0 0 11 11"><path d="M0.5 0.5L10.5 10.5M10.5 0.5L0.5 10.5" stroke="#000" stroke-width="1.1" fill="none"/></svg>
<div class="abs" style="left:9px;top:39px;width:167px;height:614px;background:#fff;border:1px solid #828282"></div>
<div class="abs" style="left:10px;top:63px;width:165px;height:23px;background:#a6cdf0"></div>
<div class="tx" style="left:37px;top:40px;line-height:17px;font-size:14px;font-weight:400">常规</div>
<svg style="left:15px;top:41px" width="18" height="20"><g><path d="M2.5 2.5H9.5L12.5 5.5V16.5H2.5Z" fill="#f4f4f4" stroke="#b4b4b4"/><rect x="4" y="4" width="6" height="2" fill="#3a7ae0"/><path d="M4 8.5H11M4 10.5H11" stroke="#c0c0c0"/><rect x="4" y="10" width="3" height="7.5" rx="1.5" fill="#3a8af0"/><rect x="8" y="9" width="3" height="8.5" rx="1.5" fill="#e84a1a"/><rect x="12" y="10" width="3" height="7.5" rx="1.5" fill="#3ab83a"/><path d="M5 11V16M9 10V16M13 11V16" stroke="#fff" stroke-opacity=".6" stroke-width="0.8"/></g></svg>
<div class="tx" style="left:37px;top:63px;line-height:17px;font-size:14px;font-weight:400">查询</div>
<svg style="left:15px;top:64px" width="18" height="20"><g><path d="M1 5.5C1 2.2 11 2.2 11 5.5V12.5C11 15.8 1 15.8 1 12.5Z" fill="#e4e4e4" stroke="#b0b0b0" stroke-width="0.8"/><path d="M1 5.5C1 8.5 11 8.5 11 5.5M1 9.5C1 12.5 11 12.5 11 9.5" fill="none" stroke="#b8b8b8" stroke-width="0.8"/><rect x="4" y="7.5" width="11.5" height="7" fill="#fff" stroke="#1878d8" stroke-width="1.4"/><path d="M6 10H12.5V12H6Z" fill="#2a6ad0"/><path d="M8 10V12M10 10V12" stroke="#fff" stroke-width="0.6"/></g></svg>
<div class="tx" style="left:37px;top:86px;line-height:17px;font-size:14px;font-weight:400">选项</div>
<svg style="left:15px;top:87px" width="18" height="20"><g><path d="M1 5.5C1 2.2 11 2.2 11 5.5V12.5C11 15.8 1 15.8 1 12.5Z" fill="#e4e4e4" stroke="#b0b0b0" stroke-width="0.8"/><path d="M1 5.5C1 8.5 11 8.5 11 5.5M1 9.5C1 12.5 11 12.5 11 9.5" fill="none" stroke="#b8b8b8" stroke-width="0.8"/><path d="M6 12.5L9 9.5L13 9L15 8V12.5L12 13.5L8 14Z" fill="#e8a040" stroke="#c07820" stroke-width="0.6"/></g></svg>
<div class="tx" style="left:37px;top:109px;line-height:17px;font-size:14px;font-weight:400">字段</div>
<svg style="left:15px;top:109px" width="18" height="20"><g><rect x="1.5" y="3.5" width="6" height="12" fill="#dfeafc" stroke="#5a8ae8"/><rect x="9.5" y="3.5" width="6" height="12" fill="#dfeafc" stroke="#5a8ae8"/><path d="M1 4.5H8M9 4.5H16" stroke="#7aa8f4" stroke-width="1.6"/><path d="M3 7.5H6M3 9.5H6M3 11.5H6M3 13.5H6M11 7.5H14M11 9.5H14M11 11.5H14M11 13.5H14" stroke="#3a6ae0"/></g></svg>
<div class="tx" style="left:37px;top:132px;line-height:17px;font-size:14px;font-weight:400">参数</div>
<svg style="left:15px;top:133px" width="18" height="20"><g><path d="M7.5 3.5L9 9L11.5 8L13 11Q12 15 8 15.5Q3 15 2.5 11L4 8L6 9Z" fill="#d8d8d8" stroke="#a8a8a8" stroke-width="0.8"/><path d="M7.5 4V12" stroke="#f8f8f8" stroke-width="1.2"/></g></svg>
<div class="tx" style="left:37px;top:155px;line-height:17px;font-size:14px;font-weight:400">过滤</div>
<svg style="left:15px;top:156px" width="18" height="20"><g><ellipse cx="8" cy="6.5" rx="6.5" ry="3.8" fill="#f4f4f4" stroke="#b8b8b8"/><path d="M1.8 7.5L7 13H9L14.2 7.5" fill="#ececec" stroke="#b8b8b8"/><rect x="6.8" y="12.5" width="2.4" height="4.5" rx="1" fill="#f4f4f4" stroke="#b0b0b0"/><rect x="7.3" y="11" width="1.4" height="1.6" fill="#555"/></g></svg>
<div class="tx" style="left:186px;top:46px;line-height:16px;font-size:12.75px;font-weight:350">命令类型(<u>C</u>):</div>
<div class="abs" style="left:184px;top:64px;width:477px;height:22px;background:#fff;border:1px solid #8e8e8e"></div>
<div class="abs" style="left:642px;top:65px;width:18px;height:20px;background:linear-gradient(#fff,#e6e6e6);border-left:1px solid #a8a8a8"></div>
<svg style="left:648px;top:74px" width="8" height="4" viewBox="0 0 8 4"><path d="M0 0H7.4L3.7 4Z" fill="#000"/></svg>
<div class="tx" style="left:188px;top:67px;line-height:14px;font-size:11.3px">Text</div>
<div class="abs" style="left:184px;top:86px;width:477px;height:33px;background:linear-gradient(#d2d2d2,#f0f0f0)"></div>
<div class="tx" style="left:186px;top:93px;line-height:16px;font-size:13px;font-weight:500;letter-spacing:1px">查询:</div>
<div class="abs" style="left:184px;top:119px;width:460px;height:160px;background:#fcfcfc;border:1px solid #2b8adc"></div>
<div class="abs" style="left:189px;top:122px;width:200px;height:14px;background:#0078d7"></div>
<div class="tx" style="left:190px;top:122px;line-height:14px;font-size:12.45px;color:#fff">select Customers.* from Customers</div>
<svg style="left:648px;top:125px" width="9" height="6" viewBox="0 0 9 6"><path d="M1 5L4.5 1.5L8 5" stroke="#bcbcbc" stroke-width="1.9" fill="none"/></svg>
<svg style="left:648px;top:267px" width="9" height="6" viewBox="0 0 9 6"><path d="M1 1L4.5 4.5L8 1" stroke="#bcbcbc" stroke-width="1.9" fill="none"/></svg>
<div class="tx" style="left:186px;top:287px;line-height:16px;font-size:12.75px;font-weight:350">超时(<u>T</u>):</div>
<div class="abs" style="left:184px;top:304px;width:477px;height:20px;background:#fff;border:1px solid #9c9c9c"></div>
<div class="tx" style="left:187px;top:307px;line-height:14px;font-size:11px">0</div>
<div class="abs" style="left:498px;top:670px;width:79px;height:23px;background:linear-gradient(#f6f6f6,#e4e4e4);border:1px solid #8a8a8a;border-radius:3px;text-align:center;font-size:12.5px;line-height:18px;padding-right:2px">确定</div>
<div class="abs" style="left:586px;top:670px;width:79px;height:23px;background:linear-gradient(#f6f6f6,#e4e4e4);border:1px solid #8a8a8a;border-radius:3px;text-align:center;font-size:12.5px;line-height:18px;padding-right:2px">取消</div>
<svg style="left:597px;top:94px" width="16" height="16" viewBox="0 0 16 16"><path d="M1.8 14.2L3 10.5L11.5 2Q13 0.9 14.2 2.3Q15.1 3.5 14 4.6L5.5 13Z" fill="#fff" stroke="#2492e4" stroke-width="1.3" stroke-linejoin="round"/><path d="M10.6 3L13 5.5M3 10.6L5.4 13" stroke="#2492e4" stroke-width="1" fill="none"/></svg>
<svg style="left:619px;top:94px" width="16" height="16" viewBox="0 0 16 16"><path d="M1.5 9L5.5 13.5L14.5 1.5" stroke="#1fc01f" stroke-width="2.6" fill="none"/></svg>
<div class="tx" style="left:643.5px;top:92px;line-height:18px;font-size:14px;font-family:'Liberation Serif',serif;font-style:italic;font-weight:bold">f<span style="font-size:10px;position:relative;top:-2.5px;left:-0.5px">x</span></div>
</div>
</body></html>
